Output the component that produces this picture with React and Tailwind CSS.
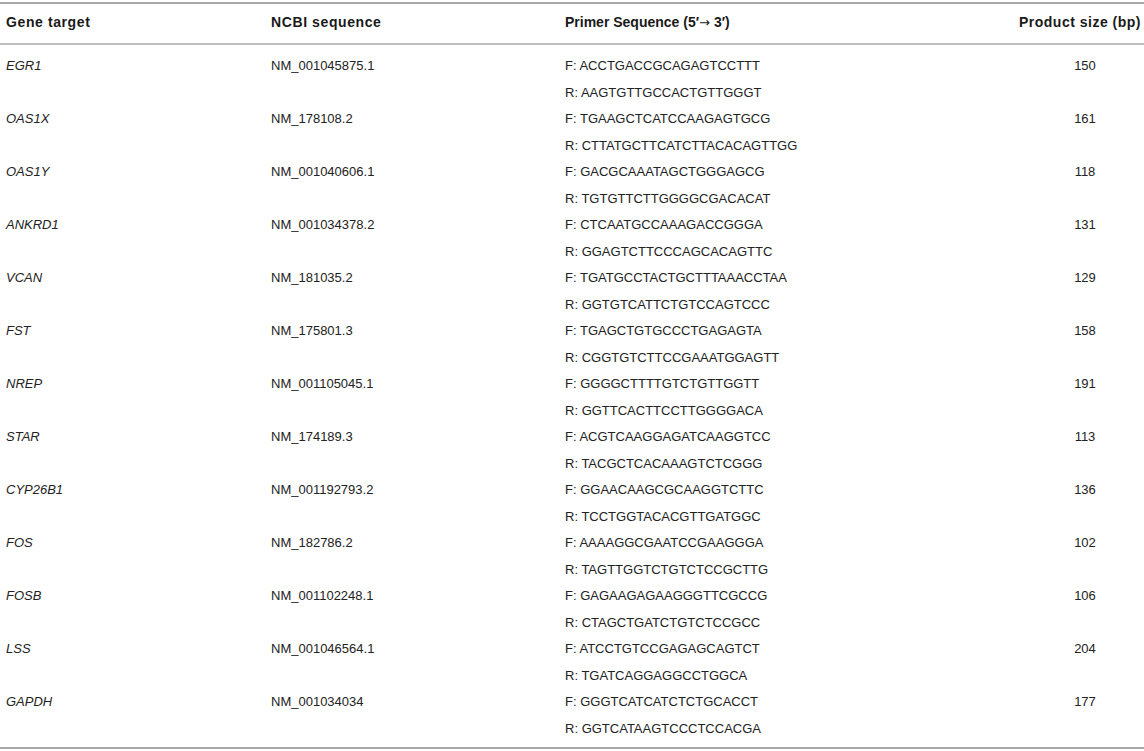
import React from "react";

const rows = [
  ["EGR1", "NM_001045875.1", "ACCTGACCGCAGAGTCCTTT", "AAGTGTTGCCACTGTTGGGT", "150"],
  ["OAS1X", "NM_178108.2", "TGAAGCTCATCCAAGAGTGCG", "CTTATGCTTCATCTTACACAGTTGG", "161"],
  ["OAS1Y", "NM_001040606.1", "GACGCAAATAGCTGGGAGCG", "TGTGTTCTTGGGGCGACACAT", "118"],
  ["ANKRD1", "NM_001034378.2", "CTCAATGCCAAAGACCGGGA", "GGAGTCTTCCCAGCACAGTTC", "131"],
  ["VCAN", "NM_181035.2", "TGATGCCTACTGCTTTAAACCTAA", "GGTGTCATTCTGTCCAGTCCC", "129"],
  ["FST", "NM_175801.3", "TGAGCTGTGCCCTGAGAGTA", "CGGTGTCTTCCGAAATGGAGTT", "158"],
  ["NREP", "NM_001105045.1", "GGGGCTTTTGTCTGTTGGTT", "GGTTCACTTCCTTGGGGACA", "191"],
  ["STAR", "NM_174189.3", "ACGTCAAGGAGATCAAGGTCC", "TACGCTCACAAAGTCTCGGG", "113"],
  ["CYP26B1", "NM_001192793.2", "GGAACAAGCGCAAGGTCTTC", "TCCTGGTACACGTTGATGGC", "136"],
  ["FOS", "NM_182786.2", "AAAAGGCGAATCCGAAGGGA", "TAGTTGGTCTGTCTCCGCTTG", "102"],
  ["FOSB", "NM_001102248.1", "GAGAAGAGAAGGGTTCGCCG", "CTAGCTGATCTGTCTCCGCC", "106"],
  ["LSS", "NM_001046564.1", "ATCCTGTCCGAGAGCAGTCT", "TGATCAGGAGGCCTGGCA", "204"],
  ["GAPDH", "NM_001034034", "GGGTCATCATCTCTGCACCT", "GGTCATAAGTCCCTCCACGA", "177"],
];

export default function App() {
  return (
    <div
      className="w-[1144px] h-[751px] bg-white text-[#222] pt-[2px]"
      style={{ fontFamily: '"Liberation Sans", Arial, sans-serif' }}
    >
      <div className="border-t-2 border-b-2 border-[#a8a8a8]">
        <div className="grid grid-cols-[265px_294px_1fr_160px] pl-[6px] pr-[3px] h-[41px] items-center pb-[2px] border-b-2 border-[#bdbdbd] text-[14px] font-bold text-[#1a1a1a]">
          <div className="tracking-[0.6px]">Gene target</div>
          <div className="tracking-[0.6px]">NCBI sequence</div>
          <div>
            Primer Sequence (5′
            <span className="text-[13px] font-normal font-['DejaVu_Sans']">→</span> 3′)
          </div>
          <div className="text-right tracking-[0.5px]">Product size (bp)</div>
        </div>
        <div className="pt-[8px] pb-[5px]">
          {rows.map((r) => (
            <div
              key={r[0]}
              className="grid grid-cols-[265px_294px_1fr_160px] pl-[6px] pr-[3px] text-[13px] leading-[26.5px]"
            >
              <div className="italic">{r[0]}</div>
              <div>{r[1]}</div>
              <div className="flex flex-col">
                <span>F: {r[2]}</span>
                <span>R: {r[3]}</span>
              </div>
              <div className="text-center pl-[48px]">{r[4]}</div>
            </div>
          ))}
        </div>
      </div>
    </div>
  );
}
